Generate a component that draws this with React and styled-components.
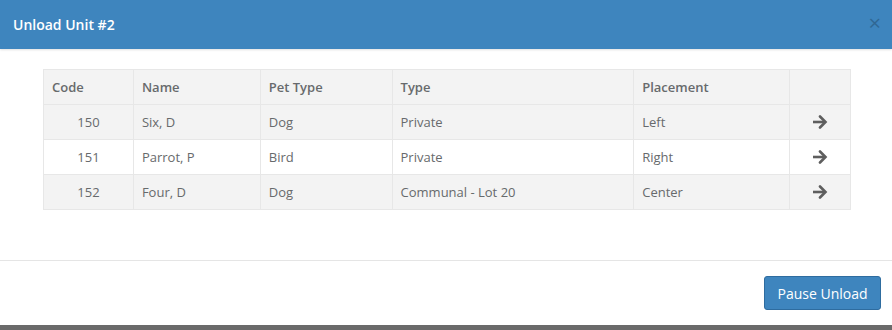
import React from "react";
import styled, { createGlobalStyle } from "styled-components";

const Global = createGlobalStyle`
  html, body { margin: 0; padding: 0; background: #6a6a6a; }
  body { font-family: "Open Sans", "Liberation Sans", sans-serif; color: #676a6c; }
`;

const Modal = styled.div`
  width: 892px;
  height: 325px;
  background: #fff;
  display: flex;
  flex-direction: column;
  box-sizing: border-box;
`;

const Header = styled.div`
  height: 49px;
  background: #3e85be;
  display: flex;
  align-items: center;
  justify-content: space-between;
  padding: 0 11px 0 13px;
  box-sizing: border-box;
  box-shadow: 0 1px 2px rgba(0, 0, 0, 0.12);
  position: relative;
  z-index: 1;
`;

const Title = styled.h4`
  margin: 0;
  color: #fff;
  font-size: 14px;
  font-weight: 600;
  line-height: 1;
`;

const Close = styled.button`
  border: 0;
  background: transparent;
  padding: 0;
  margin-bottom: 6px;
  color: #000;
  opacity: 0.22;
  font-size: 22px;
  line-height: 1;
  font-family: "Open Sans", sans-serif;
  cursor: pointer;
`;

const Body = styled.div`
  padding: 20px 41px 0 43px;
  flex: 1;
`;

const Table = styled.table`
  width: 808px;
  border-collapse: collapse;
  font-size: 13px;
  color: #676a6c;
`;

const Th = styled.th`
  height: 35px;
  padding: 0 8px;
  text-align: left;
  font-weight: 600;
  background: #f3f3f3;
  border: 1px solid #e7e7e7;
  width: ${(p) => p.$w}px;
  box-sizing: border-box;
`;

const Row = styled.tr`
  background: ${(p) => (p.$striped ? "#f3f3f3" : "#fff")};
`;

const Td = styled.td`
  height: 35px;
  padding: 0 8px;
  border: 1px solid #e7e7e7;
  text-align: ${(p) => p.$align || "left"};
  box-sizing: border-box;
`;

const Footer = styled.div`
  border-top: 1px solid #e5e5e5;
  height: 65px;
  box-sizing: border-box;
  display: flex;
  justify-content: flex-end;
  align-items: flex-start;
  padding: 15px 11px 0 0;
`;

const Button = styled.button`
  width: 117px;
  height: 34px;
  background: #3e85be;
  border: 1px solid #2e6c9f;
  border-radius: 3px;
  color: #fff;
  font-family: "Open Sans", "Liberation Sans", sans-serif;
  font-size: 14px;
  padding: 0;
  cursor: pointer;
`;

const Arrow = () => (
  <svg width="16" height="14" viewBox="0 0 16 14" style={{ display: "block", margin: "0 auto" }}>
    <path d="M1 7H13" stroke="#5e5e5e" strokeWidth="2.6" strokeLinecap="butt" />
    <path d="M8 1.5L13.5 7L8 12.5" fill="none" stroke="#5e5e5e" strokeWidth="2.6" strokeLinecap="round" strokeLinejoin="miter" />
  </svg>
);

const rows = [
  { code: 150, name: "Six, D", pet: "Dog", type: "Private", place: "Left" },
  { code: 151, name: "Parrot, P", pet: "Bird", type: "Private", place: "Right" },
  { code: 152, name: "Four, D", pet: "Dog", type: "Communal - Lot 20", place: "Center" },
];

export default function App() {
  return (
    <>
      <Global />
      <Modal>
        <Header>
          <Title>Unload Unit #2</Title>
          <Close>×</Close>
        </Header>
        <Body>
          <Table>
            <thead>
              <tr>
                <Th $w={90}>Code</Th>
                <Th $w={127}>Name</Th>
                <Th $w={132}>Pet Type</Th>
                <Th $w={242}>Type</Th>
                <Th $w={156}>Placement</Th>
                <Th $w={61}></Th>
              </tr>
            </thead>
            <tbody>
              {rows.map((r, i) => (
                <Row key={r.code} $striped={i % 2 === 0}>
                  <Td $align="center">{r.code}</Td>
                  <Td>{r.name}</Td>
                  <Td>{r.pet}</Td>
                  <Td>{r.type}</Td>
                  <Td>{r.place}</Td>
                  <Td $align="center"><Arrow /></Td>
                </Row>
              ))}
            </tbody>
          </Table>
        </Body>
        <Footer>
          <Button>Pause Unload</Button>
        </Footer>
      </Modal>
    </>
  );
}
